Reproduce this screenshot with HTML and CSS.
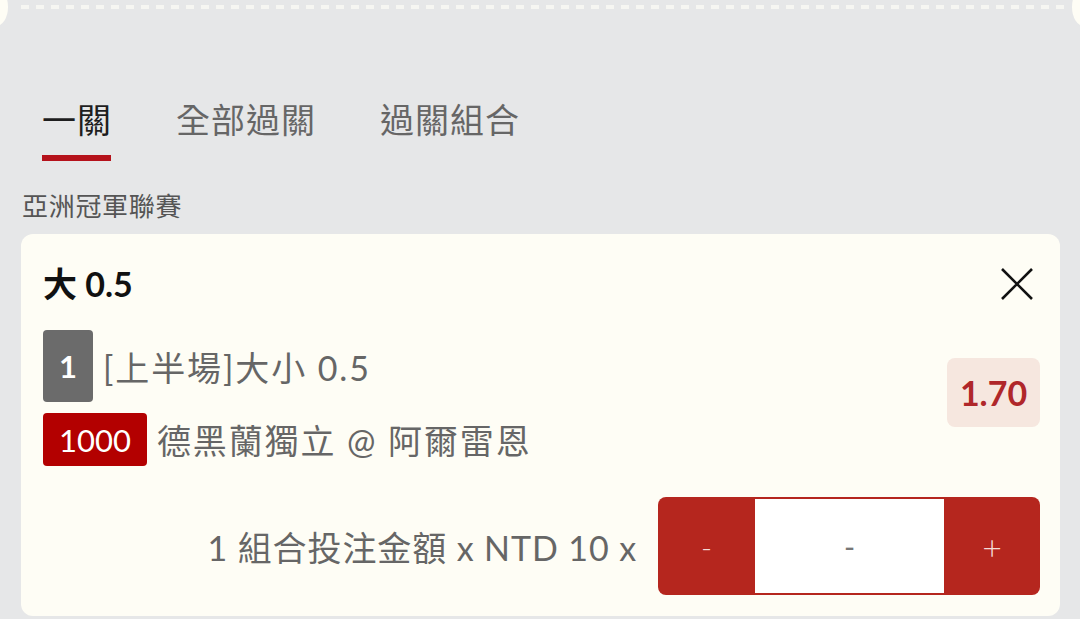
FILE: index.html
```html
<!DOCTYPE html>
<html lang="zh-Hant">
<head>
    <meta charset="UTF-8">
    <meta name="viewport" content="width=device-width, initial-scale=1.0">
    <title>投注單</title>
    <link rel="stylesheet" href="styles.css">
</head>
<body>
    <div class="ticket-edge"></div>

    <div class="tabs">
        <div class="tab active">一關</div>
        <div class="tab">全部過關</div>
        <div class="tab">過關組合</div>
    </div>

    <div class="league">亞洲冠軍聯賽</div>

    <div class="bet-card">
        <div class="bet-head">
            <div class="bet-title">大 0.5</div>
            <button class="close-btn" aria-label="close">
                <svg width="36" height="36" viewBox="0 0 36 36">
                    <path d="M3 3 L33 33 M33 3 L3 33" stroke="#111" stroke-width="2.6" fill="none"/>
                </svg>
            </button>
        </div>

        <div class="bet-body">
            <div class="bet-lines">
                <div class="bet-line">
                    <span class="tag tag-gray">1</span>
                    <span class="line-text">[上半場]大小 0.5</span>
                </div>
                <div class="bet-line">
                    <span class="tag tag-red">1000</span>
                    <span class="line-text">德黑蘭獨立 @ 阿爾雷恩</span>
                </div>
            </div>
            <div class="odds">1.70</div>
        </div>

        <div class="bet-foot">
            <div class="stake-text">1 組合投注金額 x NTD 10 x</div>
            <div class="stepper">
                <button class="step minus">-</button>
                <div class="step-value">-</div>
                <button class="step plus">+</button>
            </div>
        </div>
    </div>
</body>
</html>
```

FILE: styles.css
```css
body {
    margin: 0;
    padding: 0;
    background: #e6e7e8;
    font-family: 'Lato', 'Noto Sans CJK TC', sans-serif;
    overflow: hidden;
}

.ticket-edge {
    position: relative;
    height: 28px;
    background: repeating-linear-gradient(90deg, transparent 0 7px, #f6f6f2 7px 15px) 0 5px / 100% 4px no-repeat;
    margin: 0 14px;
}

.ticket-edge::before,
.ticket-edge::after {
    content: '';
    position: absolute;
    top: -12px;
    width: 24px;
    height: 38px;
    border-radius: 50%;
    background: #fefdf5;
}

.ticket-edge::before {
    left: -30px;
}

.ticket-edge::after {
    right: -30px;
}

.tabs {
    display: flex;
    gap: 64px;
    padding: 0 42px;
    margin-top: 72px;
}

.tab {
    font-size: 34px;
    line-height: 40px;
    letter-spacing: 1px;
    color: #666;
    padding-bottom: 21px;
}

.tab.active {
    color: #1e1e1e;
    position: relative;
}

.tab.active::after {
    content: '';
    position: absolute;
    left: 0;
    right: 1px;
    bottom: 0;
    height: 6px;
    background: #b5121b;
}

.league {
    font-size: 26px;
    line-height: 34px;
    letter-spacing: 0.7px;
    color: #555;
    padding-left: 22px;
    margin-top: 28px;
}

.bet-card {
    background: #fefdf5;
    border-radius: 12px;
    margin: 11px 20px 0 21px;
    padding: 30px 20px 21px 22px;
}

.bet-head {
    display: flex;
    justify-content: space-between;
    align-items: center;
}

.bet-title {
    font-size: 34px;
    line-height: 40px;
    font-weight: 700;
    color: #111;
}

.close-btn {
    border: none;
    background: none;
    padding: 0;
    margin-right: 5px;
    width: 36px;
    height: 36px;
}

.bet-body {
    display: flex;
    align-items: center;
    justify-content: space-between;
    margin-top: 26px;
}

.bet-lines {
    display: flex;
    flex-direction: column;
    gap: 11px;
}

.bet-line {
    display: flex;
    align-items: center;
    gap: 10px;
}

.tag {
    display: flex;
    align-items: center;
    justify-content: center;
    color: #fff;
    border-radius: 4px;
    font-size: 31px;
}

.tag-gray {
    background: #6b6b6b;
    width: 50px;
    height: 72px;
    font-weight: 700;
}

.tag-red {
    background: #b30000;
    height: 53px;
    padding: 0 16px;
}

.line-text {
    font-size: 34px;
    letter-spacing: 1.9px;
    color: #666;
}

.odds {
    background: #f6e7df;
    color: #b0272a;
    font-weight: 700;
    font-size: 34px;
    width: 93px;
    height: 69px;
    border-radius: 8px;
    display: flex;
    align-items: center;
    justify-content: center;
    margin-top: -12px;
}

.bet-foot {
    display: flex;
    justify-content: flex-end;
    align-items: center;
    gap: 21px;
    margin-top: 31px;
}

.stake-text {
    font-size: 34px;
    letter-spacing: 0.9px;
    color: #666;
}

.stepper {
    display: flex;
    width: 382px;
    height: 98px;
    background: #b5261e;
    border-radius: 8px;
    padding: 2px 0;
    box-sizing: border-box;
}

.step {
    border: none;
    background: none;
    color: #f4dcd8;
    width: 97px;
    font-family: 'Lato', sans-serif;
    font-size: 30px;
    font-weight: 300;
    padding: 0;
}

.step.plus {
    width: 96px;
    font-size: 34px;
}

.step-value {
    flex: 1;
    background: #fff;
    color: #777;
    font-size: 30px;
    display: flex;
    align-items: center;
    justify-content: center;
}
```
